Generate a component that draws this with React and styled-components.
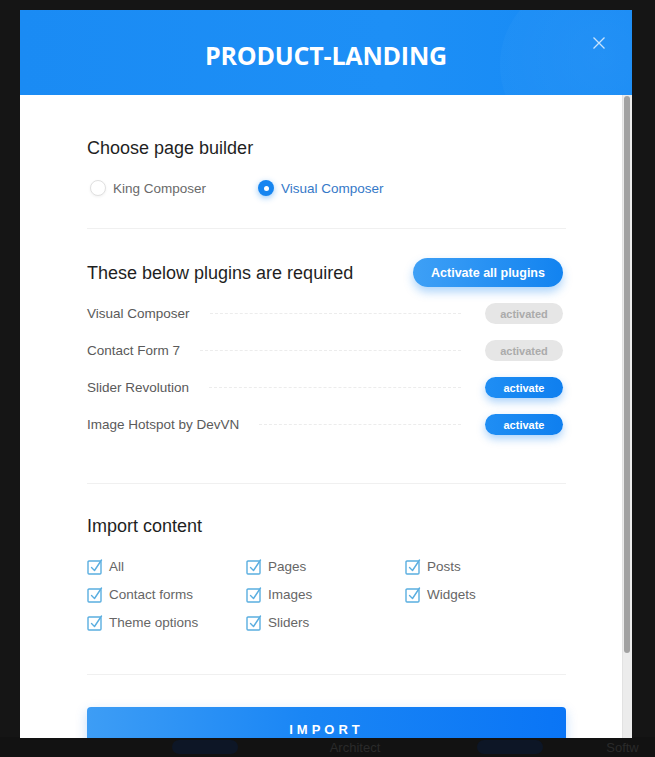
import React from "react";
import styled, { createGlobalStyle } from "styled-components";

const GlobalStyle = createGlobalStyle`
  html, body {
    margin: 0;
    padding: 0;
    height: 100%;
    background: #151515;
    font-family: "Liberation Sans", Arial, sans-serif;
  }
  #root {
    height: 100%;
  }
`;

const Page = styled.div`
  height: 100vh;
  display: flex;
  flex-direction: column;
  justify-content: flex-end;
  overflow: hidden;
`;

const BackStrip = styled.div`
  display: grid;
  grid-template-columns: 130px 150px 150px 160px 1fr;
  align-items: center;
  height: 20px;
  color: #2a2a2a;
  font-size: 13px;
  background: #121212;

  > span {
    text-align: center;
  }
`;

const BackPill = styled.span`
  justify-self: center;
  width: 66px;
  height: 14px;
  border-radius: 7px;
  background: #0d1626;
`;

const Modal = styled.div`
  position: fixed;
  top: 10px;
  left: 20px;
  width: 612px;
  height: 728px;
  background: #fff;
  display: flex;
  flex-direction: column;
  overflow: hidden;
`;

const Header = styled.header`
  position: relative;
  flex: 0 0 85px;
  display: flex;
  align-items: center;
  justify-content: center;
  background: linear-gradient(90deg, #1a8bf4 0%, #1d8ff6 60%, #168af5 100%);
  overflow: hidden;

  &::after {
    content: "";
    position: absolute;
    left: 480px;
    top: -30px;
    width: 170px;
    height: 170px;
    border-radius: 50%;
    background: radial-gradient(circle at 60% 45%, rgba(255, 255, 255, 0.05), rgba(255, 255, 255, 0.025) 70%);
  }
`;

const Title = styled.h1`
  margin: 4px 0 0;
  font-family: "Open Sans", "Liberation Sans", sans-serif;
  font-weight: 700;
  font-size: 25px;
  letter-spacing: -0.2px;
  color: #fff;
`;

const Close = styled.button`
  position: absolute;
  top: 26px;
  right: 26px;
  width: 14px;
  height: 14px;
  padding: 0;
  border: 0;
  background: none;
  z-index: 1;
`;

const BodyWrap = styled.div`
  flex: 1;
  min-height: 0;
  display: flex;
`;

const Body = styled.div`
  flex: 1;
  overflow: hidden;
  padding: 41px 56px 84px 67px;
`;

const ScrollTrack = styled.div`
  flex: 0 0 10px;
  box-sizing: border-box;
  padding: 1px 2px 0 1px;
  background: #ececec;
  border-left: 1px solid #e2e2e2;
`;

const ScrollThumb = styled.div`
  height: 557px;
  border-radius: 4px;
  background: #a2a2a2;
`;

const Heading = styled.h2`
  margin: 0;
  font-size: 18px;
  line-height: 24px;
  font-weight: 400;
  color: #1f1f1f;
`;

const RadioRow = styled.div`
  display: flex;
  gap: 52px;
  margin-top: 18px;
  height: 20px;
  align-items: center;
  padding-left: 3px;
`;

const RadioLabel = styled.label`
  display: flex;
  align-items: center;
  gap: 7px;
  font-size: 13.5px;
  color: ${(p) => (p.checked ? "#3579c8" : "#6a6a6a")};
`;

const RadioDot = styled.span`
  width: 16px;
  height: 16px;
  border-radius: 50%;
  box-sizing: border-box;
  display: flex;
  align-items: center;
  justify-content: center;
  background: ${(p) => (p.checked ? "#1685f0" : "#fff")};
  border: ${(p) => (p.checked ? "none" : "1px solid #e0e0e0")};
  box-shadow: ${(p) =>
    p.checked ? "0 2px 6px rgba(22, 133, 240, 0.45)" : "0 1px 3px rgba(0,0,0,0.06)"};

  &::after {
    content: "";
    display: ${(p) => (p.checked ? "block" : "none")};
    width: 5px;
    height: 5px;
    border-radius: 50%;
    background: #fff;
  }
`;

const Divider = styled.hr`
  margin: ${(p) => p.margin || "30px 0 29px"};
  border: 0;
  border-top: 1px solid #f0f0f0;
`;

const PluginHead = styled.div`
  display: flex;
  align-items: center;
  justify-content: space-between;
  height: 29px;
`;

const ActivateAll = styled.button`
  width: 150px;
  height: 29px;
  margin-right: 3px;
  border: 0;
  border-radius: 15px;
  background: linear-gradient(90deg, #3ea0f6 0%, #1283f0 100%);
  box-shadow: 0 5px 10px rgba(25, 135, 240, 0.35);
  color: #fff;
  font-family: "Liberation Sans", Arial, sans-serif;
  font-weight: 700;
  font-size: 12.5px;
`;

const PluginList = styled.div`
  margin-top: 8px;
`;

const PluginRow = styled.div`
  display: flex;
  align-items: center;
  height: 37px;
`;

const PluginName = styled.span`
  font-size: 13.5px;
  color: #5a5a5a;
`;

const Leader = styled.span`
  flex: 1;
  margin: 0 24px 0 20px;
  border-bottom: 1px dashed #ececec;
`;

const Badge = styled.span`
  width: 78px;
  height: 21px;
  margin-right: 3px;
  border-radius: 11px;
  display: flex;
  align-items: center;
  justify-content: center;
  font-size: 11px;
  font-weight: 700;
  background: ${(p) => (p.done ? "#e6e6e6" : "linear-gradient(90deg, #1f8ef4, #0f7fef)")};
  color: ${(p) => (p.done ? "#ababab" : "#fff")};
  box-shadow: ${(p) => (p.done ? "none" : "0 4px 8px rgba(20, 130, 240, 0.35)")};
`;

const CheckGrid = styled.div`
  display: grid;
  grid-template-columns: 159px 159px 1fr;
  grid-auto-rows: 28px;
  margin-top: 14px;
`;

const CheckItem = styled.label`
  display: flex;
  align-items: center;
  gap: 5px;
  font-size: 13.5px;
  color: #666;
`;

const ImportButton = styled.button`
  width: 100%;
  height: 44px;
  border: 0;
  border-radius: 4px;
  background: linear-gradient(90deg, #3d9df5 0%, #1a86f5 45%, #0a75f6 100%);
  box-shadow: 0 4px 12px rgba(20, 120, 240, 0.25);
  color: #fff;
  font-family: "Liberation Sans", Arial, sans-serif;
  font-weight: 700;
  font-size: 13px;
  letter-spacing: 4px;
`;

const CheckIcon = () => (
  <svg width="17" height="17" viewBox="0 0 17 17" fill="none">
    <rect x="1" y="3" width="13" height="13" rx="1" stroke="#5aaee0" strokeWidth="1.4" />
    <path d="M4.5 9.5 L7.5 12.5 L14.5 2" stroke="#5aaee0" strokeWidth="1.4" strokeLinecap="round" strokeLinejoin="round" />
  </svg>
);

const plugins = [
  { name: "Visual Composer", done: true },
  { name: "Contact Form 7", done: true },
  { name: "Slider Revolution", done: false },
  { name: "Image Hotspot by DevVN", done: false },
];

const contents = ["All", "Pages", "Posts", "Contact forms", "Images", "Widgets", "Theme options", "Sliders"];

const App = () => {
  return (
    <>
      <GlobalStyle />
      <Page>
        <BackStrip>
          <span />
          <BackPill />
          <span>Architect</span>
          <BackPill />
          <span>Softw</span>
        </BackStrip>
      </Page>
      <Modal>
        <Header>
          <Title>PRODUCT-LANDING</Title>
          <Close aria-label="close">
            <svg width="14" height="14" viewBox="0 0 14 14">
              <path d="M1.5 1.5 L12.5 12.5 M12.5 1.5 L1.5 12.5" stroke="rgba(255,255,255,0.75)" strokeWidth="1.3" />
            </svg>
          </Close>
        </Header>
        <BodyWrap>
          <Body>
            <Heading>Choose page builder</Heading>
            <RadioRow>
              <RadioLabel>
                <RadioDot />
                King Composer
              </RadioLabel>
              <RadioLabel checked>
                <RadioDot checked />
                Visual Composer
              </RadioLabel>
            </RadioRow>
            <Divider />
            <PluginHead>
              <Heading>These below plugins are required</Heading>
              <ActivateAll>Activate all plugins</ActivateAll>
            </PluginHead>
            <PluginList>
              {plugins.map((p) => (
                <PluginRow key={p.name}>
                  <PluginName>{p.name}</PluginName>
                  <Leader />
                  <Badge done={p.done}>{p.done ? "activated" : "activate"}</Badge>
                </PluginRow>
              ))}
            </PluginList>
            <Divider margin="40px 0 30px" />
            <Heading>Import content</Heading>
            <CheckGrid>
              {contents.map((c) => (
                <CheckItem key={c}>
                  <CheckIcon />
                  {c}
                </CheckItem>
              ))}
            </CheckGrid>
            <Divider margin="38px 0 32px" />
            <ImportButton>IMPORT</ImportButton>
          </Body>
          <ScrollTrack>
            <ScrollThumb />
          </ScrollTrack>
        </BodyWrap>
      </Modal>
    </>
  );
};

export default App;
